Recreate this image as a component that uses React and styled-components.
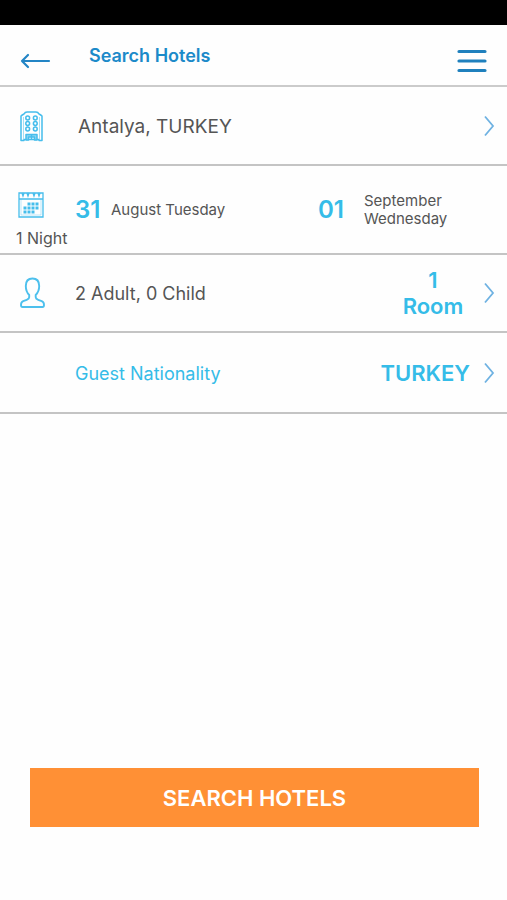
import React from 'react';
import styled, { createGlobalStyle } from 'styled-components';

const GlobalStyle = createGlobalStyle`
  * {
    box-sizing: border-box;
  }

  body {
    margin: 0;
    background: #fefefe;
    color: #555;
    font-family: Inter, 'Liberation Sans', sans-serif;
  }

  button {
    margin: 0;
    padding: 0;
    border: 0;
    background: none;
    color: inherit;
    font: inherit;
    text-align: left;
    cursor: pointer;
  }

  svg {
    display: block;
    flex-shrink: 0;
  }
`;

const Page = styled.div`
  min-height: 100vh;
  display: flex;
  flex-direction: column;
`;

const StatusBar = styled.div`
  height: 25px;
  background: #000;
`;

const Header = styled.header`
  height: 62px;
  padding: 0 20px;
  display: flex;
  align-items: center;
  border-bottom: 2px solid #cbcbcb;
`;

const IconButton = styled.button`
  padding-top: 12px;
`;

const Title = styled.h1`
  flex: 1;
  margin: 0;
  padding: 2px 0 0 38px;
  color: #1c8ac9;
  font-size: 18px;
  font-weight: 600;
  line-height: 24px;
`;

const Row = styled.button`
  width: 100%;
  height: ${({ $height }) => $height}px;
  display: grid;
  grid-template-columns: 75px 1fr auto 37px;
  align-items: center;
  border-bottom: 2px solid #c4c4c4;
`;

const DateRow = styled.div`
  height: 89px;
  display: grid;
  grid-template-columns: 75px 9fr 7fr;
  align-items: center;
  border-bottom: 2px solid #c4c4c4;
`;

const IconCell = styled.span`
  padding-left: 19px;
`;

const Nights = styled.div`
  padding: 20px 0 0 16px;
  font-size: 16px;
  line-height: 20px;
  white-space: nowrap;

  svg {
    margin: 0 0 10px 2px;
  }
`;

const DateButton = styled.button`
  display: grid;
  grid-template-columns: ${({ $dayWidth }) => $dayWidth}px 1fr;
  align-items: center;
  font-size: 15px;
  line-height: 18px;
`;

const Day = styled.span`
  color: #35bce8;
  font-size: 24px;
  font-weight: 600;
`;

const Line = styled.span`
  display: block;
`;

const Place = styled.span`
  padding: 2px 0 0 3px;
  font-size: 19px;
`;

const Guests = styled.span`
  font-size: 18px;
`;

const Label = styled.span`
  padding-top: 2px;
  color: #35bce8;
  font-size: 18px;
`;

const Value = styled.span`
  min-width: 74px;
  color: #35bce8;
  font-size: 22px;
  font-weight: 600;
  line-height: 26px;
  text-align: center;
`;

const Chevron = styled.svg`
  grid-column: 4;
  margin-left: 13px;
`;

const Footer = styled.footer`
  margin-top: auto;
  padding: 30px 28px 73px 30px;
`;

const SearchButton = styled.button`
  width: 100%;
  height: 59px;
  background: #ff9035;
  color: #fff;
  font-size: 22px;
  font-weight: 600;
  text-align: center;
`;

const BackIcon = () => (
  <svg width="31" height="16" viewBox="0 0 31 16" fill="none" stroke="#2385c5" strokeWidth="2.2" strokeLinecap="round" strokeLinejoin="round">
    <path d="M29 8H2M8 2L2 8l6 6" />
  </svg>
);

const MenuIcon = () => (
  <svg width="30" height="24" viewBox="0 0 30 24" stroke="#1f80bd" strokeWidth="3.2" strokeLinecap="round">
    <path d="M2 2.500h26M2 12h26M2 21.500h26" />
  </svg>
);

const HotelIcon = () => (
  <svg width="25" height="32" viewBox="0 0 25 32" fill="none" stroke="#45bdec" strokeWidth="1.5" strokeLinejoin="round">
    <path d="M2 30.500V6q1-1 3-2 1-2 3-2h9q2 0 3 2 2 1 3 2v24.500h-3v-1H5v1z" />
    <path d="M4.500 29V7M20.500 29V7" strokeWidth="0.8" opacity="0.6" />
    {[8, 13.5, 19].map((y) => (
      <React.Fragment key={y}>
        <circle cx="8.7" cy={y} r="1.9" />
        <circle cx="16.3" cy={y} r="1.9" />
      </React.Fragment>
    ))}
    <path d="M7 24.500h11V30h-2.500v-3h-6v3H7z" fill="#8bd6f3" />
    <path d="M12.500 25v5" />
  </svg>
);

const CALENDAR_DAYS = [
  [11, 11], [15, 11], [19, 11],
  [7, 15], [11, 15], [15, 15], [19, 15],
  [7, 19], [11, 19], [15, 19],
];

const CalendarIcon = () => (
  <svg width="26" height="26" viewBox="0 0 26 26" fill="none" stroke="#45bdec" strokeWidth="1.3">
    <path d="M1 1h24v24H1zM1 7h24" />
    <path d="M4 1l1 3 1-3M9 1l1 3 1-3M15 1l1 3 1-3M20 1l1 3 1-3" />
    <path d="M3 7v16h20V7" strokeWidth="0.6" opacity="0.6" />
    {CALENDAR_DAYS.map(([x, y]) => (
      <rect key={`${x}-${y}`} x={x - 1.5} y={y - 0.5} width="3" height="3" fill="#45bdec" stroke="none" />
    ))}
  </svg>
);

const PersonIcon = () => (
  <svg width="27" height="32" viewBox="0 0 27 32" fill="none" stroke="#4dc0ed" strokeWidth="1.9" strokeLinejoin="round">
    <path d="M13.500 1.500C9.200 1.500 6.800 4.500 6.800 9c0 4 1.400 7 3.400 9v2.300c0 1.300-1 1.900-2.500 2.500l-3.500 1.400C2.500 25 2 26.500 2 28 2 29.500 2.500 30 3.500 30h20c1 0 1.500-.5 1.500-2 0-1.500-.5-3-2.300-3.800l-3.500-1.400c-1.500-.6-2.500-1.200-2.500-2.500V18c2-2 3.500-5 3.500-9 0-4.500-2.400-7.500-6.700-7.500z" />
  </svg>
);

const ChevronIcon = () => (
  <Chevron width="12" height="22" viewBox="0 0 12 22" fill="none" stroke="#6fb2e2" strokeWidth="1.8">
    <path d="M2 1.500L10 11 2 20.500" />
  </Chevron>
);

const App = () => {
  return (
    <Page>
      <GlobalStyle />
      <StatusBar />
      <Header>
        <IconButton type="button" aria-label="Back">
          <BackIcon />
        </IconButton>
        <Title>Search Hotels</Title>
        <IconButton type="button" aria-label="Menu">
          <MenuIcon />
        </IconButton>
      </Header>
      <main>
        <Row type="button" $height={79}>
          <IconCell>
            <HotelIcon />
          </IconCell>
          <Place>Antalya, TURKEY</Place>
          <ChevronIcon />
        </Row>
        <DateRow>
          <Nights>
            <CalendarIcon />
            1 Night
          </Nights>
          <DateButton type="button" $dayWidth={36}>
            <Day>31</Day>
            <span>August Tuesday</span>
          </DateButton>
          <DateButton type="button" $dayWidth={46}>
            <Day>01</Day>
            <span>
              <Line>September</Line>
              <Line>Wednesday</Line>
            </span>
          </DateButton>
        </DateRow>
        <Row type="button" $height={78}>
          <IconCell>
            <PersonIcon />
          </IconCell>
          <Guests>2 Adult, 0 Child</Guests>
          <Value>
            <Line>1</Line>
            <Line>Room</Line>
          </Value>
          <ChevronIcon />
        </Row>
        <Row type="button" $height={81}>
          <span />
          <Label>Guest Nationality</Label>
          <Value>TURKEY</Value>
          <ChevronIcon />
        </Row>
      </main>
      <Footer>
        <SearchButton type="button">SEARCH HOTELS</SearchButton>
      </Footer>
    </Page>
  );
};

export default App;
